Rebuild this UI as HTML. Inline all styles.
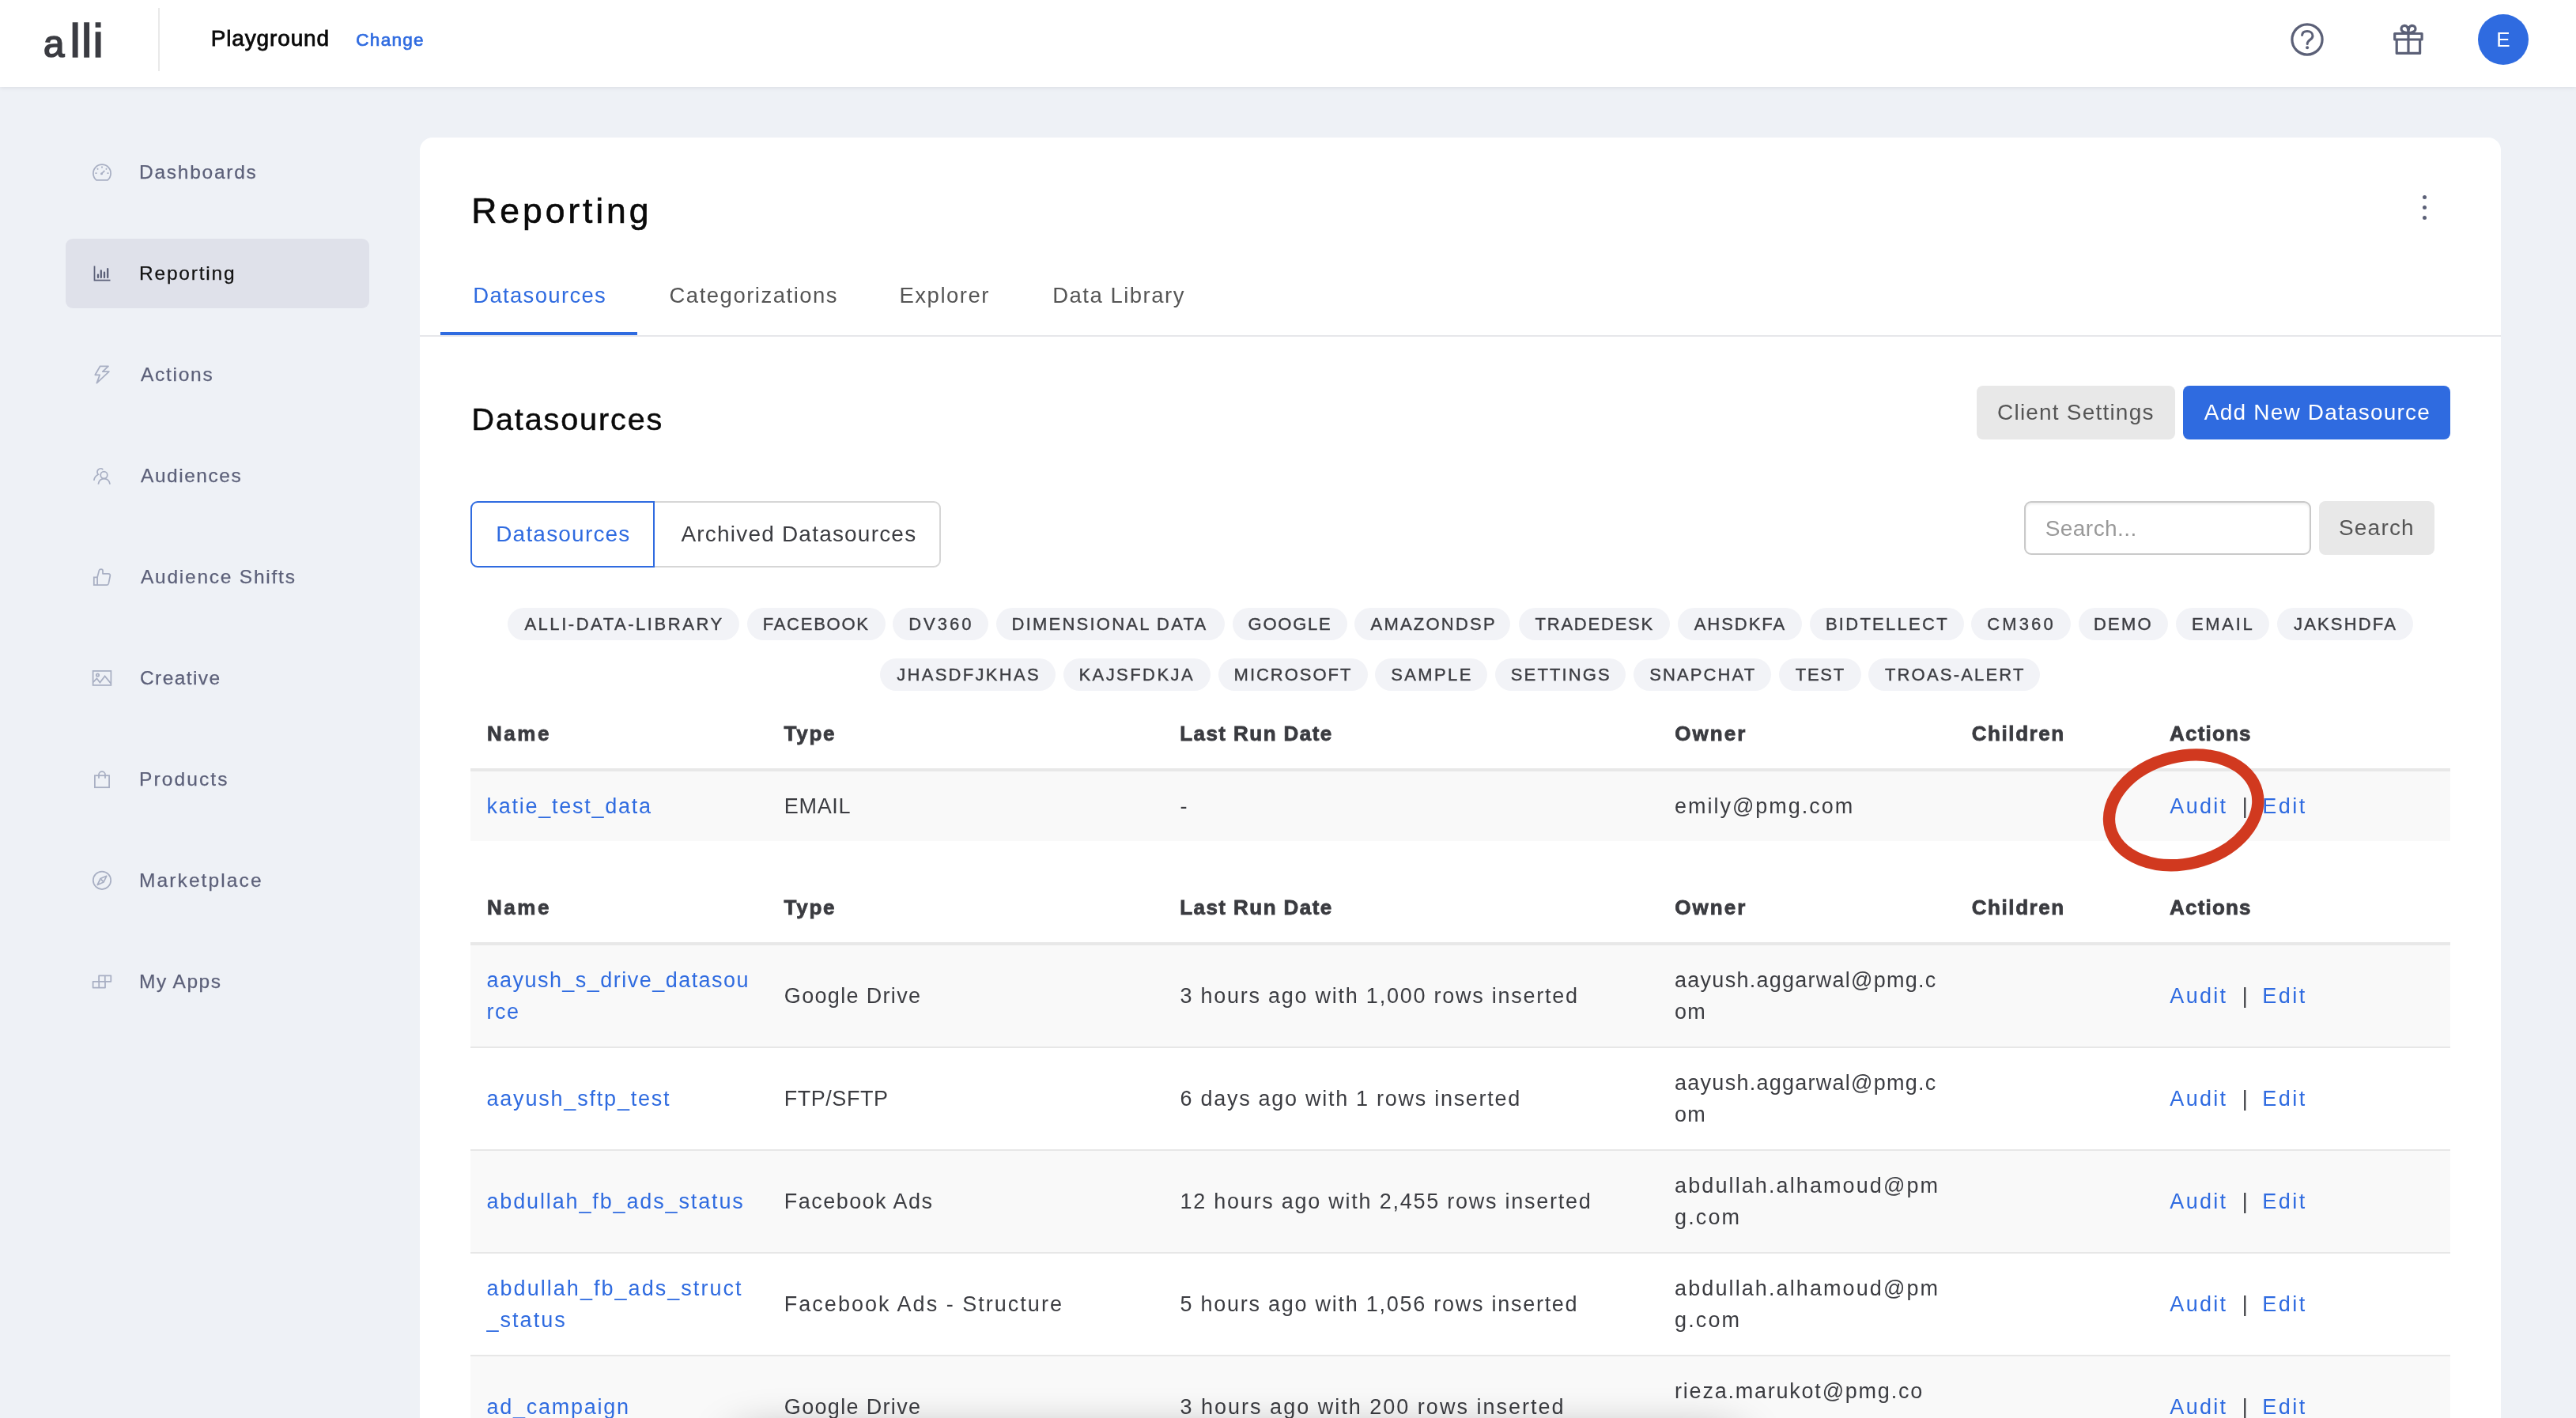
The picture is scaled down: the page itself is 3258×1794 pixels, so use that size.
<!DOCTYPE html>
<html lang="en">
<head>
<meta charset="utf-8">
<title>Reporting - Datasources</title>
<style>
*{box-sizing:border-box;margin:0;padding:0}
html,body{width:3258px;height:1794px;overflow:hidden}
body{will-change:transform;background:#eef1f6;font-family:"Liberation Sans",sans-serif;color:#3b3c41;font-size:27px;position:relative}
a{text-decoration:none;color:#2f6be0}
ul{list-style:none}
/* header */
#hdr{position:absolute;left:0;top:0;width:3258px;height:110px;background:#fff;box-shadow:0 1px 5px rgba(40,40,60,.10);z-index:5}
#logo{position:absolute;left:55px;top:11.6px;font-size:59.5px;line-height:80px;letter-spacing:1.35px;white-space:nowrap;color:#3b3c42;-webkit-text-stroke:1.7px #3b3c42}
#logo::first-letter{font-size:47.5px;margin-right:5.7px}
#hdiv{position:absolute;left:200px;top:10px;width:2px;height:80px;background:#e9e9e9}
#client{position:absolute;left:266.7px;top:29px;font-size:28px;line-height:40px;color:#0a0a0a;white-space:nowrap;letter-spacing:.86px;-webkit-text-stroke:.8px #0a0a0a}
#change{position:absolute;left:450.3px;top:32.5px;font-size:22.5px;line-height:36px;white-space:nowrap;letter-spacing:1.3px;-webkit-text-stroke:.7px #2f6be0}
.hico{position:absolute;top:20px;width:60px;height:60px;fill:none;stroke:#5b6077;stroke-width:3.2;stroke-linecap:round;stroke-linejoin:round}
#avatar{position:absolute;left:3134px;top:18px;width:64px;height:64px;border-radius:50%;background:#2f6be0;color:#fff;font-size:26px;line-height:64px;text-align:center}
/* sidebar */
nav li{position:absolute;left:83px;width:384px;height:88px;border-radius:9px;color:#5c6079;font-size:24.5px;line-height:88px;white-space:nowrap}
nav span{position:absolute;top:.8px;-webkit-text-stroke:.25px}
nav svg{position:absolute;left:17px;top:16.5px;width:60px;height:60px;stroke:#a8afc3;fill:none;stroke-width:1.75}
nav li.on{background:#dfe1ea;color:#111}
nav li.on svg{stroke:#5b6078}
/* card */
#card{position:absolute;left:531px;top:174px;width:2632px;height:1700px;background:#fff;border-radius:16px}
#ptitle{position:absolute;left:65.3px;top:60.7px;font-size:44.5px;line-height:64px;font-weight:normal;color:#0a0a0a;white-space:nowrap;letter-spacing:3.9px;-webkit-text-stroke:.6px #0a0a0a}
#kebab{position:absolute;left:2531px;top:71px;width:10px;height:36px}
#kebab i{position:absolute;left:2px;width:5.4px;height:5.4px;border-radius:50%;background:#5b6077}
#tabs a{position:absolute;top:180px;font-size:27.5px;line-height:40px;color:#555;white-space:nowrap;letter-spacing:1.5px}
#tabs a.on{color:#2f6be0}
#tabline{position:absolute;left:0;top:250px;width:2632px;height:2px;background:#e6e7ea}
#tabul{position:absolute;left:26px;top:246.3px;width:248.7px;height:4px;background:#2f6be0}
#h2{position:absolute;left:65.5px;top:328px;font-size:39.5px;line-height:56px;font-weight:normal;color:#0a0a0a;white-space:nowrap;letter-spacing:1.9px;-webkit-text-stroke:.5px #0a0a0a}
.btn{position:absolute;height:68.2px;border-radius:8px;font-size:28px;line-height:67px;white-space:nowrap;text-align:center;letter-spacing:1.2px}
.grey{background:#e8e8e8;color:#555}
.blue{background:#2f6be0;color:#fff}
#seg{position:absolute;left:64.4px;top:460.2px;height:83.6px;width:594px;font-size:28px;line-height:79.6px;white-space:nowrap;letter-spacing:1.2px}
#seg a{position:absolute;top:0;height:83.6px;border:2px solid #d6d6d6;text-align:center;color:#3b3c41}
#seg a.on{left:0;width:233px;border-color:#2f6be0;color:#2f6be0;border-radius:9px 0 0 9px;z-index:1;text-indent:1px}
#seg a.off{left:231px;width:364px;border-radius:0 9px 9px 0;text-indent:4px}
#q{position:absolute;left:2029.2px;top:460px;width:363.3px;height:67.6px;border:2px solid #c9c9c9;border-radius:9px;box-shadow:inset 0 2px 3px rgba(0,0,0,.07);font-size:28px;line-height:65px;color:#999;padding-left:24.5px;white-space:nowrap;letter-spacing:.45px}
#chips{position:absolute;left:64px;top:594.9px;width:2502px;height:105px}
#chips li{position:absolute;height:40.8px;border-radius:21px;background:#f2f3f7;color:#3c3d42;font-size:22px;line-height:41px;white-space:nowrap;overflow:hidden;-webkit-text-stroke:.4px #3c3d42}
table{position:absolute;left:64.3px;width:2503.6px;border-collapse:separate;border-spacing:0;table-layout:fixed}
th{height:92px;border-bottom:4px solid #e8e8e8;text-align:left;font-size:26px;font-weight:bold;color:#3a3b40;padding:0 0 0 20.8px;line-height:40px;white-space:nowrap;-webkit-text-stroke:.8px #3a3b40}
td{height:130px;border-top:2px solid #e7e7e7;padding:0 0 0 20.2px;line-height:40px;white-space:nowrap;vertical-align:middle}
tbody tr:first-child td{height:128px;border-top:0}
tbody tr:nth-child(odd) td{background:#f9f9f9}
#t1 td{height:88px}
.w{display:block;white-space:normal;word-break:break-all}
td i{font-style:normal;display:inline-block;width:43.8px;text-align:center;color:#3b3c41}
td:nth-child(2),td:nth-child(3){padding-left:21px}
td:nth-child(4){padding-left:20.7px}
td:nth-child(6){padding-left:21.1px}
#ring{position:absolute;left:2100px;top:750px;width:260px;height:200px;overflow:visible}
#fade{position:absolute;left:930px;top:1822px;width:1270px;height:40px;border-radius:20px;background:#888;box-shadow:0 0 60px rgba(0,0,0,.48);z-index:9}
</style>
</head>
<body>
<header id="hdr">
  <div id="logo">alli</div>
  <div id="hdiv"></div>
  <div id="client">Playground</div>
  <a id="change">Change</a>
  <svg class="hico" style="left:2888px" viewBox="0 0 60 60"><circle cx="30" cy="30" r="19.1"/><path d="M23.6 24.4C24 20.6 27 19.6 30 19.6C34 19.6 37 22 37 25.4C37 30.4 30.2 30.2 30.2 35.6" stroke-width="3"/><circle cx="30.1" cy="40.3" r="2" fill="#5b6077" stroke="none"/></svg>
  <svg class="hico" style="left:3016px" viewBox="0 0 60 60"><path d="M12.7 22.5H47.1V30H12.7ZM15.2 30V47.4H44.6V30M30 22.5V47.4"/><path d="M30 21.8C28 21.4 21 21.6 21 16.6C21 14 23 12.3 25.4 12.3C28.6 12.3 30 15.4 30 21.8C30 15.4 31.4 12.3 34.6 12.3C37 12.3 39 14 39 16.6C39 21.6 32 21.4 30 21.8Z"/></svg>
  <div id="avatar">E</div>
</header>

<nav><ul>
  <li style="top:173.5px"><svg viewBox="0 0 60 60"><path d="M21.9 37.8A11.1 11.1 0 1 1 36.1 37.8Z"/><path d="M28.4 29.9L32.3 25.9" stroke-width="1.7"/><circle cx="28.5" cy="29.8" r="1.5" fill="#a8afc3" stroke="none"/><path d="M20.5 29.2h2M35.5 29.2h2M29 20.6v2M22.9 23.1l1.3 1.4M35.1 23.1l-1.3 1.4"/></svg><span style="left:93.0px;letter-spacing:1.74px">Dashboards</span></li>
  <li class="on" style="top:301.5px"><svg viewBox="0 0 60 60"><path d="M19.5 18.5V36.5H39.5"/><path d="M24 29.6v3.4M27.8 24.5v8.5M32 26.6v6.4M36.2 22.2v10.8" stroke-width="2.3" stroke-linecap="round"/></svg><span style="left:93.0px;letter-spacing:1.8px">Reporting</span></li>
  <li style="top:429.5px"><svg style="top:14.5px" viewBox="0 0 60 60"><path d="M26.7 19.3H37L29.8 26.1H37.9L22.4 40.6L26.2 30.3H20.3Z" stroke-linejoin="round"/></svg><span style="left:95.0px;letter-spacing:1.73px">Actions</span></li>
  <li style="top:557.5px"><svg style="top:14.5px" viewBox="0 0 60 60"><circle cx="31.5" cy="29" r="4.3"/><path d="M24.3 40.6C25 36 28 33.5 31.6 33.5S38.3 36 39.1 40.6"/><path d="M30.3 22.1A4.3 4.3 0 1 0 24.3 28.3C21.5 29.6 19.4 32.2 18.8 35.8"/></svg><span style="left:95.0px;letter-spacing:1.54px">Audiences</span></li>
  <li style="top:685.5px"><svg style="top:14.5px" viewBox="0 0 60 60"><path d="M18.8 30.3H23.1V40.2H18.8Z"/><path d="M23.1 30.3L25.4 21.6C26 19.6 29.9 19.3 30 22V25.8H37C38.6 25.8 39.6 27 39.3 28.5L37.3 38.4C37 39.6 36.4 40.2 35.3 40.2H23.1" stroke-linejoin="round"/></svg><span style="left:95.0px;letter-spacing:1.76px">Audience Shifts</span></li>
  <li style="top:813.5px"><svg style="top:14.5px" viewBox="0 0 60 60"><rect x="17.6" y="20.9" width="22.8" height="18"/><circle cx="23.5" cy="26" r="1.7"/><path d="M17.8 35.1L22.4 30.3L26.4 35.5L32.6 27.5L40.2 36.6"/></svg><span style="left:94.0px;letter-spacing:1.4px">Creative</span></li>
  <li style="top:941.5px"><svg style="top:14.5px" viewBox="0 0 60 60"><rect x="19.9" y="25.2" width="18.2" height="15"/><path d="M25 28.8V24.2A4 4 0 0 1 33 24.2V28.8"/></svg><span style="left:93.0px;letter-spacing:2.12px">Products</span></li>
  <li style="top:1069.5px"><svg style="top:14.5px" viewBox="0 0 60 60"><circle cx="29" cy="29.8" r="11.2"/><path d="M34.7 24.3L27.1 27.5L23.3 35.5L31.1 32Z" stroke-linejoin="round"/><path d="M27.6 28.3L30.6 31.4"/></svg><span style="left:93.0px;letter-spacing:2.11px">Marketplace</span></li>
  <li style="top:1197.5px"><svg style="top:14.5px" viewBox="0 0 60 60"><path d="M25.1 22.4H40.3V29.8H25.1ZM32.8 22.4V29.8M17.6 29.8H33V37.5H17.6ZM25.2 29.8V37.5" stroke-linejoin="round"/></svg><span style="left:93.0px;letter-spacing:1.49px">My Apps</span></li>
</ul></nav>

<main id="card">
  <h1 id="ptitle">Reporting</h1>
  <div id="kebab"><i style="top:1.5px"></i><i style="top:14.8px"></i><i style="top:28px"></i></div>
  <div id="tabs">
    <a class="on" style="left:67.2px;letter-spacing:1.33px">Datasources</a>
    <a style="left:315.5px">Categorizations</a>
    <a style="left:606.5px">Explorer</a>
    <a style="left:800.2px">Data Library</a>
  </div>
  <div id="tabline"></div><div id="tabul"></div>
  <h2 id="h2">Datasources</h2>
  <a class="btn grey" style="left:1968.9px;top:313.9px;width:250.9px">Client Settings</a>
  <a class="btn blue" style="left:2230px;top:313.9px;width:337.9px;text-indent:2px">Add New Datasource</a>

  <div id="seg"><a class="on">Datasources</a><a class="off">Archived Datasources</a></div>
  <div id="q">Search...</div>
  <a class="btn grey" style="left:2401.9px;top:460px;width:146.1px">Search</a>

  <ul id="chips">
    <li style="left:47.2px;top:0px;width:292.5px;padding-left:21.2px;letter-spacing:2.54px">ALLI-DATA-LIBRARY</li>
    <li style="left:350.1px;top:0px;width:174.8px;padding-left:19.6px;letter-spacing:1.76px">FACEBOOK</li>
    <li style="left:534.3px;top:0px;width:120.7px;padding-left:19.9px;letter-spacing:2.99px">DV360</li>
    <li style="left:664.8px;top:0px;width:288.8px;padding-left:19.8px;letter-spacing:2.22px">DIMENSIONAL DATA</li>
    <li style="left:964.0px;top:0px;width:144.5px;padding-left:19.6px;letter-spacing:1.74px">GOOGLE</li>
    <li style="left:1118.3px;top:0px;width:197.2px;padding-left:20.2px;letter-spacing:2.23px">AMAZONDSP</li>
    <li style="left:1326.0px;top:0px;width:190.7px;padding-left:20.5px;letter-spacing:1.78px">TRADEDESK</li>
    <li style="left:1527.2px;top:0px;width:156.4px;padding-left:20.5px;letter-spacing:1.96px">AHSDKFA</li>
    <li style="left:1694.3px;top:0px;width:194.7px;padding-left:19.6px;letter-spacing:2.28px">BIDTELLECT</li>
    <li style="left:1898.1px;top:0px;width:125.6px;padding-left:20.2px;letter-spacing:3.13px">CM360</li>
    <li style="left:2033.5px;top:0px;width:113.5px;padding-left:19.5px;letter-spacing:2.17px">DEMO</li>
    <li style="left:2156.7px;top:0px;width:118.7px;padding-left:20.2px;letter-spacing:2.73px">EMAIL</li>
    <li style="left:2285.2px;top:0px;width:171.5px;padding-left:20.8px;letter-spacing:2.17px">JAKSHDFA</li>
    <li style="left:518.4px;top:64.3px;width:221.4px;padding-left:20.8px;letter-spacing:2.3px">JHASDFJKHAS</li>
    <li style="left:749.6px;top:64.3px;width:186.1px;padding-left:19.8px;letter-spacing:2.45px">KAJSFDKJA</li>
    <li style="left:946.1px;top:64.3px;width:188.5px;padding-left:19.5px;letter-spacing:1.98px">MICROSOFT</li>
    <li style="left:1144.3px;top:64.3px;width:141.6px;padding-left:19.9px;letter-spacing:2.38px">SAMPLE</li>
    <li style="left:1296.3px;top:64.3px;width:165.0px;padding-left:19.5px;letter-spacing:2.12px">SETTINGS</li>
    <li style="left:1471.0px;top:64.3px;width:173.6px;padding-left:20.3px;letter-spacing:2.1px">SNAPCHAT</li>
    <li style="left:1654.7px;top:64.3px;width:104.2px;padding-left:21.1px;letter-spacing:1.7px">TEST</li>
    <li style="left:1768.4px;top:64.3px;width:217.1px;padding-left:20.5px;letter-spacing:2.19px">TROAS-ALERT</li>
  </ul>

  <table id="t1" style="top:710px">
    <colgroup><col style="width:375.5px"><col style="width:500.7px"><col style="width:625.9px"><col style="width:375.5px"><col style="width:250.4px"><col style="width:375.6px"></colgroup>
    <thead><tr><th style="letter-spacing:2.48px">Name</th><th style="letter-spacing:1.7px">Type</th><th style="letter-spacing:1.43px">Last Run Date</th><th style="letter-spacing:2.1px">Owner</th><th style="letter-spacing:1.59px">Children</th><th style="letter-spacing:1.19px">Actions</th></tr></thead>
    <tbody>
      <tr><td><a style="letter-spacing:1.74px">katie_test_data</a></td><td><span style="letter-spacing:0.67px">EMAIL</span></td><td>-</td><td><span style="letter-spacing:1.97px">emily@pmg.com</span></td><td></td><td><a style="letter-spacing:2.29px">Audit</a><i>|</i><a style="letter-spacing:2.56px">Edit</a></td></tr>
    </tbody>
  </table>

  <table id="t2" style="top:930px">
    <colgroup><col style="width:375.5px"><col style="width:500.7px"><col style="width:625.9px"><col style="width:375.5px"><col style="width:250.4px"><col style="width:375.6px"></colgroup>
    <thead><tr><th style="letter-spacing:2.48px">Name</th><th style="letter-spacing:1.7px">Type</th><th style="letter-spacing:1.43px">Last Run Date</th><th style="letter-spacing:2.1px">Owner</th><th style="letter-spacing:1.59px">Children</th><th style="letter-spacing:1.19px">Actions</th></tr></thead>
    <tbody>
      <tr><td><a class="w" style="letter-spacing:1.47px;width:337.8px">aayush_s_drive_datasource</a></td><td><span style="letter-spacing:1.33px">Google Drive</span></td><td><span style="letter-spacing:1.75px">3 hours ago with 1,000 rows inserted</span></td><td><span class="w" style="letter-spacing:1.26px;width:339.7px">aayush.aggarwal@pmg.com</span></td><td></td><td><a style="letter-spacing:2.29px">Audit</a><i>|</i><a style="letter-spacing:2.56px">Edit</a></td></tr>
      <tr><td><a style="letter-spacing:1.8px">aayush_sftp_test</a></td><td><span style="letter-spacing:0.52px">FTP/SFTP</span></td><td><span style="letter-spacing:1.72px">6 days ago with 1 rows inserted</span></td><td><span class="w" style="letter-spacing:1.26px;width:339.7px">aayush.aggarwal@pmg.com</span></td><td></td><td><a style="letter-spacing:2.29px">Audit</a><i>|</i><a style="letter-spacing:2.56px">Edit</a></td></tr>
      <tr><td><a style="letter-spacing:1.86px">abdullah_fb_ads_status</a></td><td><span style="letter-spacing:1.46px">Facebook Ads</span></td><td><span style="letter-spacing:1.75px">12 hours ago with 2,455 rows inserted</span></td><td><span class="w" style="letter-spacing:2.1px;width:343.7px">abdullah.alhamoud@pmg.com</span></td><td></td><td><a style="letter-spacing:2.29px">Audit</a><i>|</i><a style="letter-spacing:2.56px">Edit</a></td></tr>
      <tr><td><a class="w" style="letter-spacing:2.04px;width:332.6px">abdullah_fb_ads_struct_status</a></td><td><span style="letter-spacing:2.02px">Facebook Ads - Structure</span></td><td><span style="letter-spacing:1.74px">5 hours ago with 1,056 rows inserted</span></td><td><span class="w" style="letter-spacing:2.1px;width:343.7px">abdullah.alhamoud@pmg.com</span></td><td></td><td><a style="letter-spacing:2.29px">Audit</a><i>|</i><a style="letter-spacing:2.56px">Edit</a></td></tr>
      <tr><td><a style="letter-spacing:1.75px">ad_campaign</a></td><td><span style="letter-spacing:1.33px">Google Drive</span></td><td><span style="letter-spacing:2.01px">3 hours ago with 200 rows inserted</span></td><td><span class="w" style="letter-spacing:1.77px;width:327.0px">rieza.marukot@pmg.com</span></td><td></td><td><a style="letter-spacing:2.29px">Audit</a><i>|</i><a style="letter-spacing:2.56px">Edit</a></td></tr>
    </tbody>
  </table>

  <svg id="ring" viewBox="0 0 260 200"><ellipse cx="130.65" cy="100.8" rx="95.6" ry="67.8" transform="rotate(-14.1 130.65 100.8)" fill="none" stroke="#d1391f" stroke-width="15.3"/></svg>
</main>
<div id="fade"></div>
</body>
</html>
